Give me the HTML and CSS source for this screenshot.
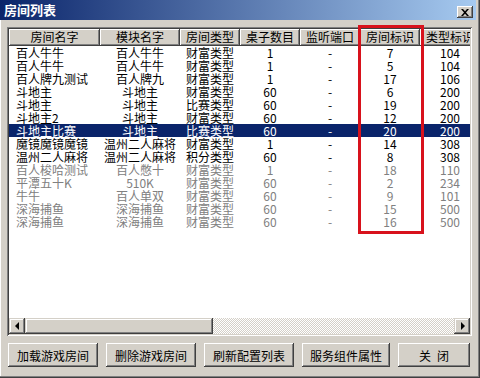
FILE: index.html
```html
<!DOCTYPE html>
<html lang="zh-CN">
<head>
<meta charset="utf-8">
<title>房间列表</title>
<link rel="stylesheet" href="styles.css">
</head>
<body>
<div class="window">
  <div class="titlebar">
    <span class="title">房间列表</span>
    <button class="close" aria-label="关闭">
      <svg width="8" height="7" viewBox="0 0 8 7"><path d="M0 0h2l2 2.2L6 0h2L5 3.5 8 7H6L4 4.8 2 7H0l3-3.5z" fill="#000"/></svg>
    </button>
  </div>
  <div class="client">
    <div class="listview">
      <div class="viewport">
        <table class="grid">
          <colgroup>
            <col class="c1"><col class="c2"><col class="c3"><col class="c4"><col class="c5"><col class="c6"><col class="c7">
          </colgroup>
          <thead>
            <tr><th>房间名字</th><th>模块名字</th><th>房间类型</th><th>桌子数目</th><th>监听端口</th><th>房间标识</th><th>类型标识</th></tr>
          </thead>
          <tbody>
            <tr><td>百人牛牛</td><td>百人牛牛</td><td>财富类型</td><td>1</td><td>-</td><td>7</td><td>104</td></tr>
            <tr><td>百人牛牛</td><td>百人牛牛</td><td>财富类型</td><td>1</td><td>-</td><td>5</td><td>104</td></tr>
            <tr><td>百人牌九测试</td><td>百人牌九</td><td>财富类型</td><td>1</td><td>-</td><td>17</td><td>106</td></tr>
            <tr><td>斗地主</td><td>斗地主</td><td>财富类型</td><td>60</td><td>-</td><td>6</td><td>200</td></tr>
            <tr><td>斗地主</td><td>斗地主</td><td>比赛类型</td><td>60</td><td>-</td><td>19</td><td>200</td></tr>
            <tr><td>斗地主2</td><td>斗地主</td><td>财富类型</td><td>60</td><td>-</td><td>12</td><td>200</td></tr>
            <tr class="selected"><td>斗地主比赛</td><td>斗地主</td><td>比赛类型</td><td>60</td><td>-</td><td>20</td><td>200</td></tr>
            <tr><td>魔镜魔镜魔镜</td><td>温州二人麻将</td><td>财富类型</td><td>1</td><td>-</td><td>14</td><td>308</td></tr>
            <tr><td>温州二人麻将</td><td>温州二人麻将</td><td>积分类型</td><td>60</td><td>-</td><td>8</td><td>308</td></tr>
            <tr class="disabled"><td>百人梭哈测试</td><td>百人憋十</td><td>财富类型</td><td>1</td><td>-</td><td>18</td><td>110</td></tr>
            <tr class="disabled"><td>平潭五十K</td><td>510K</td><td>财富类型</td><td>60</td><td>-</td><td>2</td><td>234</td></tr>
            <tr class="disabled"><td>牛牛</td><td>百人单双</td><td>财富类型</td><td>60</td><td>-</td><td>9</td><td>101</td></tr>
            <tr class="disabled"><td>深海捕鱼</td><td>深海捕鱼</td><td>财富类型</td><td>60</td><td>-</td><td>15</td><td>500</td></tr>
            <tr class="disabled"><td>深海捕鱼</td><td>深海捕鱼</td><td>财富类型</td><td>60</td><td>-</td><td>16</td><td>500</td></tr>
          </tbody>
        </table>
      </div>
      <div class="hscroll">
        <div class="sb-btn"><span class="tri-left"></span></div>
        <div class="sb-thumb"></div>
        <div class="sb-track"></div>
        <div class="sb-btn"><span class="tri-right"></span></div>
      </div>
    </div>
    <div class="buttons">
      <button class="btn w90">加载游戏房间</button>
      <button class="btn w90">删除游戏房间</button>
      <button class="btn w90">刷新配置列表</button>
      <button class="btn w88">服务组件属性</button>
      <button class="btn w72">关&ensp;闭</button>
    </div>
  </div>
  <div class="mark"></div>
</div>
</body>
</html>
```

FILE: styles.css
```css
* { box-sizing: border-box; }
html, body { margin: 0; padding: 0; }
body {
  background: #d4d0c8;
  font-family: "Noto Sans CJK SC", "Noto Sans CJK JP", sans-serif;
  font-size: 12px;
  color: #000;
}
.window {
  position: relative;
  width: 480px;
  height: 378px;
  background: #d4d0c8;
  display: flex;
  flex-direction: column;
  padding: 0 4px 3px 0;
  box-shadow: inset -1px -1px #404040, inset -2px -2px #808080, inset 1px 0 #fff;
  overflow: hidden;
}
.titlebar {
  height: 20px;
  flex: none;
  display: flex;
  justify-content: space-between;
  align-items: flex-start;
  padding: 0 3px 0 4px;
  background: linear-gradient(to right, #0a246a, #a6caf0);
}
.title {
  color: #fff;
  font-weight: bold;
  font-size: 13px;
  line-height: 20px;
}
.close {
  margin-top: 6px;
  width: 16px;
  height: 12px;
  padding: 0;
  border: none;
  background: #d4d0c8;
  box-shadow: inset -1px -1px #404040, inset 1px 1px #fff, inset -2px -2px #808080;
  display: flex;
  align-items: center;
  justify-content: center;
}
.close svg { display: block; margin-left: -1px; }
.client {
  flex: none;
  padding: 7px 0 0 7px;
}
.listview {
  width: 465px;
  height: 309px;
  padding: 2px;
  background: #fff;
  box-shadow: inset 1px 1px #808080, inset -1px -1px #fff, inset 2px 2px #404040, inset -2px -2px #d4d0c8;
  display: flex;
  flex-direction: column;
}
.viewport {
  flex: 1;
  overflow: hidden;
  background: #fff;
}
.grid {
  table-layout: fixed;
  border-collapse: collapse;
  width: 471px;
}
.c1 { width: 91px; }
.c2 { width: 80px; }
.c3, .c4, .c5, .c6, .c7 { width: 60px; }
.grid th {
  height: 17px;
  padding: 0 0 1px;
  font-weight: normal;
  line-height: 16px;
  text-align: center;
  background: #d4d0c8;
  box-shadow: inset -1px -1px #404040, inset 1px 1px #fff, inset -2px -2px #808080;
  white-space: nowrap;
  overflow: hidden;
}
.grid td {
  height: 13px;
  line-height: 13px;
  padding: 0;
  text-align: center;
  white-space: nowrap;
}
.grid td:first-child {
  text-align: left;
  padding-left: 7px;
}
.grid tr.selected td {
  background: #0a246a;
  color: #fff;
}
.grid tr.disabled td { color: #808080; }
.hscroll {
  height: 16px;
  flex: none;
  display: flex;
}
.sb-btn {
  width: 16px;
  height: 16px;
  background: #d4d0c8;
  box-shadow: inset -1px -1px #404040, inset 1px 1px #d4d0c8, inset -2px -2px #808080, inset 2px 2px #fff;
  display: flex;
  align-items: center;
  justify-content: center;
}
.tri-left, .tri-right {
  width: 0;
  height: 0;
  border-top: 4px solid transparent;
  border-bottom: 4px solid transparent;
}
.tri-left { border-right: 4px solid #000; margin-left: -1px; }
.tri-right { border-left: 4px solid #000; margin-left: 1px; }
.sb-thumb {
  width: 188px;
  height: 16px;
  background: #d4d0c8;
  box-shadow: inset -1px -1px #404040, inset 1px 1px #d4d0c8, inset -2px -2px #808080, inset 2px 2px #fff;
}
.sb-track {
  flex: 1;
  background: repeating-conic-gradient(#fff 0 25%, #d4d0c8 0 50%) 0 0 / 2px 2px;
}
.buttons {
  display: flex;
  gap: 8px;
  margin-top: 7px;
  padding-left: 1px;
}
.btn {
  height: 24px;
  padding: 0;
  border: none;
  background: #d4d0c8;
  font-family: inherit;
  font-size: 12px;
  color: #000;
  box-shadow: inset -1px -1px #404040, inset 1px 1px #fff, inset -2px -2px #808080, inset 2px 2px #d4d0c8;
}
.w90 { width: 90px; }
.w88 { width: 88px; }
.w72 { width: 72px; }
.mark {
  position: absolute;
  left: 358px;
  top: 25px;
  width: 66px;
  height: 209px;
  border: 3px solid #d8121c;
  pointer-events: none;
}
```
